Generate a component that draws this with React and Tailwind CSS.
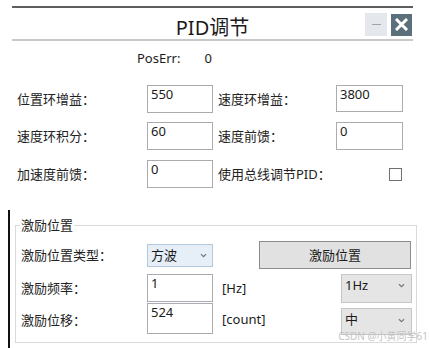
function Chevron() {
  return (
    <svg width="7" height="5" viewBox="0 0 7 5" className="shrink-0">
      <path d="M1 1.2 L3.5 3.6 L6 1.2" fill="none" stroke="#7a7a7a" strokeWidth="1.2" />
    </svg>
  );
}

function Field({ value, className = "" }) {
  return (
    <div
      className={`border border-[#a9abb0] bg-white pl-[3px] text-[13px] leading-[16px] text-[#1a1a1a] ${className}`}
    >
      {value}
    </div>
  );
}

function Label({ children, className = "" }) {
  return <div className={`shrink-0 text-[13px] leading-[16px] text-[#222] ${className}`}>{children}</div>;
}

export default function App() {
  return (
    <div className="relative h-[348px] w-[429px] overflow-hidden bg-white font-['Noto_Sans','Noto_Sans_CJK_SC',sans-serif]">
      {/* title bar */}
      <div className="pl-[12px] pt-[6px]">
        <div className="grid h-[35px] w-[401px] grid-cols-[1fr_auto_1fr] items-start border-t-2 border-b-2 border-t-[#5e5e5e] border-b-[#c8c8c8]">
          <div />
          <div className="mt-[8px] text-[20px] leading-[24px] text-[#1a1a1a]">PID调节</div>
          <div className="mt-[5px] flex items-center justify-end gap-[4px] pr-[1px]">
            <div className="flex h-[23px] w-[22px] items-center justify-center bg-[#e4e7eb]">
              <div className="h-[1px] w-[9px] bg-[#a0a4a8]" />
            </div>
            <div className="flex h-[22px] w-[21px] items-center justify-center bg-[#5c707c]">
              <svg width="13" height="13" viewBox="0 0 13 13">
                <path d="M2 2 L11 11 M11 2 L2 11" stroke="#fff" strokeWidth="3" strokeLinecap="square" />
              </svg>
            </div>
          </div>
        </div>
      </div>

      {/* PosErr */}
      <div className="mt-[9px] flex h-[16px] items-center pl-[137px] text-[13px] leading-[16px] text-[#1a1a1a]">
        <span>PosErr:</span>
        <span className="ml-[24px]">0</span>
      </div>

      {/* PID rows */}
      <div className="mt-[19px] flex h-[28px] items-center pl-[17px]">
        <Label className="w-[130px]">位置环增益：</Label>
        <Field value="550" className="h-[28px] w-[66px]" />
        <Label className="ml-[5px] w-[118px]">速度环增益：</Label>
        <Field value="3800" className="h-[27px] w-[67px] self-start" />
      </div>
      <div className="mt-[9px] flex h-[28px] items-center pl-[17px]">
        <Label className="w-[130px]">速度环积分：</Label>
        <Field value="60" className="h-[28px] w-[66px]" />
        <Label className="ml-[5px] w-[118px]">速度前馈：</Label>
        <Field value="0" className="h-[28px] w-[67px]" />
      </div>
      <div className="mt-[10px] flex h-[28px] items-center pl-[17px]">
        <Label className="w-[130px]">加速度前馈：</Label>
        <Field value="0" className="h-[28px] w-[66px]" />
        <Label className="ml-[5px] w-[171px]">使用总线调节PID：</Label>
        <div className="h-[13px] w-[13px] border border-[#707070] bg-white" />
      </div>

      {/* excitation group */}
      <div className="ml-[8px] mt-[22px] h-[138px] border-l-2 border-[#111] pt-[7px]">
        <fieldset className="ml-[5px] h-[126px] w-[402px] border border-[#dadada]">
          <legend className="ml-[4px] px-[1px] text-[13px] leading-[17px] text-[#222]">激励位置</legend>

          <div className="mt-[7px] flex h-[28px] items-center pl-[5px] pr-[5px]">
            <Label className="w-[126px]">激励位置类型：</Label>
            <div className="flex h-[23px] w-[66px] items-center justify-between border border-[#b4c8de] bg-[#e6eef8] pl-[3px] pr-[5px] text-[13px] leading-[16px] text-[#1a1a1a]">
              <span>方波</span>
              <Chevron />
            </div>
            <div className="ml-auto flex h-[28px] w-[152px] items-center justify-center border border-[#8c8c8c] bg-[#e1e1e1] text-[13px] leading-[16px] text-[#1a1a1a]">
              激励位置
            </div>
          </div>

          <div className="mt-[5px] flex h-[28px] items-center pl-[5px] pr-[4px]">
            <Label className="w-[126px]">激励频率：</Label>
            <Field value="1" className="h-[28px] w-[66px]" />
            <span className="ml-[9px] text-[13px] leading-[16px] text-[#1a1a1a]">[Hz]</span>
            <div className="ml-auto flex h-[29px] w-[71px] items-start justify-between border border-[#c6c6c6] bg-[#e5e5e5] pl-[3px] pr-[6px] pt-[2px] text-[13px] leading-[16px] text-[#1a1a1a]">
              <span>1Hz</span>
              <span className="mt-[6px]">
                <Chevron />
              </span>
            </div>
          </div>

          <div className="mt-[1px] flex h-[32px] items-start pl-[5px] pr-[4px]">
            <Label className="mt-[9px] w-[126px]">激励位移：</Label>
            <Field value="524" className="h-[31px] w-[66px]" />
            <span className="ml-[9px] mt-[8px] text-[13px] leading-[16px] text-[#1a1a1a]">[count]</span>
            <div className="ml-auto mt-[5px] flex h-[27px] w-[71px] items-start justify-between border border-[#c6c6c6] bg-[#e5e5e5] pl-[3px] pr-[6px] pt-[2px] text-[13px] leading-[16px] text-[#1a1a1a]">
              <span>中</span>
              <span className="mt-[7px]">
                <Chevron />
              </span>
            </div>
          </div>
        </fieldset>
      </div>

      {/* watermark */}
      <div className="absolute bottom-[6px] right-[1px] text-[10px] leading-[12px] text-[#c4c4c4]">CSDN @小黄同学61</div>
    </div>
  );
}
